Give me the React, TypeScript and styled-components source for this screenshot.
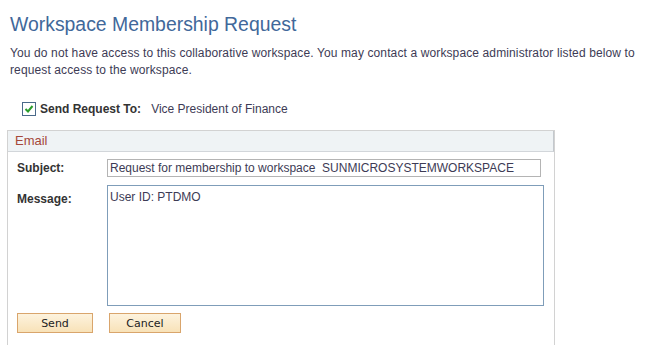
import React from 'react';
import styled, {createGlobalStyle} from 'styled-components';

const GlobalStyle = createGlobalStyle`
    html, body {
        margin: 0;
        padding: 0;
        background: #ffffff;
        font-family: "Liberation Sans", Arial, sans-serif;
        font-size: 12px;
        color: #333333;
    }
`;

const Page = styled.div`
    width: 649px;
    height: 345px;
    overflow: hidden;
    padding: 12px 0 0 10px;
    box-sizing: border-box;
`;

const Title = styled.h1`
    margin: 0;
    font-size: 19.4px;
    line-height: 24px;
    font-weight: normal;
    color: #41689a;
`;

const Intro = styled.p`
    margin: 9px 0 0 0;
    width: 636px;
    line-height: 17px;
    letter-spacing: 0.12px;
    color: #3d3b55;
`;

const RequestRow = styled.div`
    display: flex;
    align-items: center;
    height: 14px;
    margin: 23px 0 0 12px;
`;

const CheckBox = styled.span`
    display: inline-flex;
    align-items: center;
    justify-content: center;
    width: 12px;
    height: 12px;
    border: 1px solid #4a6a8a;
    background: #ffffff;
    margin-right: 4px;
`;

const FieldLabel = styled.span`
    font-weight: bold;
    color: #333333;
`;

const RequestValue = styled.span`
    margin-left: 10px;
    color: #3d3b55;
`;

const GroupBox = styled.div`
    margin: 14px 0 0 -3px;
    width: 548px;
    height: 220px;
    border: 1px solid #d2d2d2;
    border-bottom: none;
    box-sizing: border-box;
`;

const GroupHeader = styled.div`
    height: 20px;
    line-height: 20px;
    padding-left: 7px;
    background: #eff3f5;
    border-bottom: 1px solid #d2d6da;
    border-right: 1px solid #c3c8cd;
    font-size: 13px;
    color: #a5483a;
`;

const GroupBody = styled.div`
    display: grid;
    grid-template-columns: 90px auto;
    row-gap: 8px;
    padding: 7px 0 0 9px;
`;

const RowLabel = styled(FieldLabel)<{top?: boolean}>`
    align-self: ${(props) => (props.top ? 'start' : 'center')};
    padding-top: ${(props) => (props.top ? '7px' : '0')};
`;

const TextInput = styled.input`
    width: 434px;
    height: 18px;
    box-sizing: border-box;
    margin: 0;
    padding: 0 2px;
    border: 1px solid #b4b4b4;
    font-family: "Liberation Sans", Arial, sans-serif;
    font-size: 12px;
    color: #3d3b55;
    outline: none;
`;

const TextArea = styled.textarea`
    width: 437px;
    height: 121px;
    box-sizing: border-box;
    margin: 0;
    padding: 4px 2px;
    border: 1px solid #7f9db9;
    font-family: "Liberation Sans", Arial, sans-serif;
    font-size: 12px;
    color: #3d3b55;
    resize: none;
    outline: none;
`;

const ButtonBar = styled.div`
    grid-column: 1 / span 2;
    display: flex;
    gap: 16px;
    margin-top: -1px;
`;

const Button = styled.button<{w: number}>`
    width: ${(props) => props.w}px;
    height: 20px;
    box-sizing: border-box;
    margin: 0;
    padding: 0;
    border: 1px solid #d9a56c;
    background: linear-gradient(#fdf3de, #f8e2b8);
    font-family: "DejaVu Sans", "Liberation Sans", sans-serif;
    font-size: 11px;
    color: #222222;
`;

const Check: React.FC = () => (
    <svg width="10" height="10" viewBox="0 0 10 10">
        <path d="M1.5 5 L4 7.5 L8.5 2" fill="none" stroke="#2a9d2a" strokeWidth="2" />
    </svg>
);

const App: React.FC = () => {
    return (
        <>
            <GlobalStyle />
            <Page>
                <Title>{'Workspace Membership Request'}</Title>
                <Intro>
                    {'You do not have access to this collaborative workspace. You may contact a workspace administrator listed below to request access to the workspace.'}
                </Intro>
                <RequestRow>
                    <CheckBox><Check /></CheckBox>
                    <FieldLabel>{'Send Request To:'}</FieldLabel>
                    <RequestValue>{'Vice President of Finance'}</RequestValue>
                </RequestRow>
                <GroupBox>
                    <GroupHeader>{'Email'}</GroupHeader>
                    <GroupBody>
                        <RowLabel>{'Subject:'}</RowLabel>
                        <TextInput
                            readOnly={true}
                            value={'Request for membership to workspace  SUNMICROSYSTEMWORKSPACE'}
                        />
                        <RowLabel top={true}>{'Message:'}</RowLabel>
                        <TextArea readOnly={true} value={'User ID: PTDMO'} />
                        <ButtonBar>
                            <Button w={76}>{'Send'}</Button>
                            <Button w={72}>{'Cancel'}</Button>
                        </ButtonBar>
                    </GroupBody>
                </GroupBox>
            </Page>
        </>
    );
};

export default App;
